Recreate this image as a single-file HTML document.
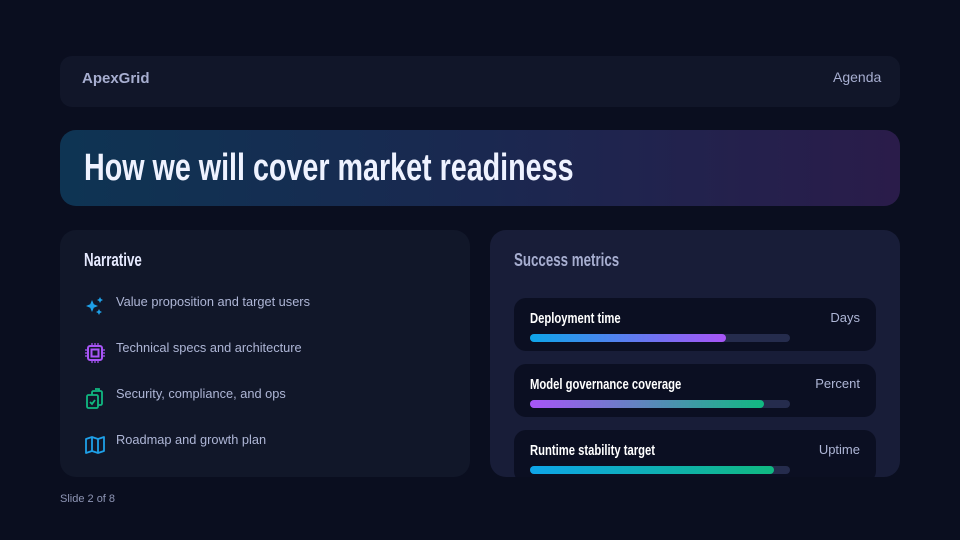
<!DOCTYPE html>
<html><head><meta charset="utf-8"><style>
*{margin:0;padding:0;box-sizing:border-box}
body{width:960px;height:540px;background:#0a0e1f;font-family:"Liberation Sans",sans-serif;position:relative;overflow:hidden}
.abs{position:absolute}
.cond{display:inline-block;transform-origin:0 50%;font-weight:bold;white-space:nowrap}
</style></head><body>
<div class="abs" style="left:60px;top:56px;width:840px;height:51px;background:#111629;border-radius:12px"></div>
<div class="abs" style="left:82px;top:70px;font-size:15px;font-weight:bold;color:#a7aed0">ApexGrid</div>
<div class="abs" style="left:833px;top:69px;font-size:14px;color:#a7aed0">Agenda</div>

<div class="abs" style="left:60px;top:130px;width:840px;height:76px;border-radius:16px;background:linear-gradient(90deg,#0e3453 0%,#1a2850 50%,#2a1c4a 100%)"></div>
<div class="abs" style="left:84px;top:146px;height:44px;line-height:44px;font-size:38px;color:#eef2ff"><span class="cond" style="transform:scaleX(0.755)">How we will cover market readiness</span></div>

<div class="abs" style="left:60px;top:230px;width:410px;height:247px;background:#111729;border-radius:16px"></div>
<div class="abs" style="left:84px;top:250px;font-size:18px;line-height:20px;color:#e6eaff"><span class="cond" style="transform:scaleX(0.74)">Narrative</span></div>

<svg class="abs" style="left:84px;top:296px" width="22" height="22" viewBox="0 0 22 22" fill="#1ea0e8"><path d="M8 4 L9.8 8.2 L14 10 L9.8 11.8 L8 16 L6.2 11.8 L2 10 L6.2 8.2Z"/><path d="M16 1 L17 3 L19 4 L17 5 L16 7 L15 5 L13 4 L15 3Z"/><path d="M15 13 L16 15 L18 16 L16 17 L15 19 L14 17 L12 16 L14 15Z"/></svg>
<div class="abs" style="left:116px;top:294px;font-size:12.8px;color:#aeb6d6">Value proposition and target users</div>

<svg class="abs" style="left:85px;top:343px" width="20" height="20" viewBox="0 0 20 20" fill="none" stroke="#a855f7" stroke-width="2"><rect x="3" y="3" width="14" height="14" rx="2"/><rect x="6.5" y="6.5" width="7" height="7"/><path d="M7 0v3M10 0v3M13 0v3M7 17v3M10 17v3M13 17v3M0 7h3M0 10h3M0 13h3M17 7h3M17 10h3M17 13h3" stroke-width="1.2"/></svg>
<div class="abs" style="left:116px;top:340px;font-size:12.8px;color:#aeb6d6">Technical specs and architecture</div>

<svg class="abs" style="left:85px;top:388px" width="20" height="22" viewBox="0 0 20 22" fill="none" stroke="#10b981" stroke-width="1.8"><rect x="7" y="3" width="10" height="14" rx="1.5"/><rect x="2" y="7" width="11" height="13" rx="1.5" fill="#111729"/><path d="M5 14l2 2 3-4"/><path d="M10 1h4v2"/></svg>
<div class="abs" style="left:116px;top:386px;font-size:12.8px;color:#aeb6d6">Security, compliance, and ops</div>

<svg class="abs" style="left:85px;top:435px" width="20" height="20" viewBox="0 0 20 20" fill="none" stroke="#1ea0e8" stroke-width="1.8" stroke-linejoin="round"><path d="M1 4 L7 2 L13 4 L19 2 L19 16 L13 18 L7 16 L1 18Z M7 2V16 M13 4V18"/></svg>
<div class="abs" style="left:116px;top:432px;font-size:12.8px;color:#aeb6d6">Roadmap and growth plan</div>

<div class="abs" style="left:490px;top:230px;width:410px;height:247px;background:#181d38;border-radius:16px;overflow:hidden">
  <div class="abs" style="left:24px;top:20px;font-size:18px;line-height:20px;color:#a7aed0"><span class="cond" style="transform:scaleX(0.74)">Success metrics</span></div>

  <div class="abs" style="left:24px;top:68px;width:362px;height:53px;background:#0b0f22;border-radius:12px"></div>
  <div class="abs" style="left:40px;top:80px;font-size:15px;color:#fff"><span class="cond" style="transform:scaleX(0.75)">Deployment time</span></div>
  <div class="abs" style="right:40px;top:80px;font-size:13px;color:#aeb6d6">Days</div>
  <div class="abs" style="left:40px;top:104px;width:260px;height:8px;border-radius:4px;background:#252c4d"></div>
  <div class="abs" style="left:40px;top:104px;width:196px;height:8px;border-radius:4px;background:linear-gradient(90deg,#0ea5e9,#a855f7)"></div>

  <div class="abs" style="left:24px;top:134px;width:362px;height:53px;background:#0b0f22;border-radius:12px"></div>
  <div class="abs" style="left:40px;top:146px;font-size:15px;color:#fff"><span class="cond" style="transform:scaleX(0.75)">Model governance coverage</span></div>
  <div class="abs" style="right:40px;top:146px;font-size:13px;color:#aeb6d6">Percent</div>
  <div class="abs" style="left:40px;top:170px;width:260px;height:8px;border-radius:4px;background:#252c4d"></div>
  <div class="abs" style="left:40px;top:170px;width:234px;height:8px;border-radius:4px;background:linear-gradient(90deg,#a855f7,#10b981)"></div>

  <div class="abs" style="left:24px;top:200px;width:362px;height:53px;background:#0b0f22;border-radius:12px"></div>
  <div class="abs" style="left:40px;top:212px;font-size:15px;color:#fff"><span class="cond" style="transform:scaleX(0.75)">Runtime stability target</span></div>
  <div class="abs" style="right:40px;top:212px;font-size:13px;color:#aeb6d6">Uptime</div>
  <div class="abs" style="left:40px;top:236px;width:260px;height:8px;border-radius:4px;background:#252c4d"></div>
  <div class="abs" style="left:40px;top:236px;width:244px;height:8px;border-radius:4px;background:linear-gradient(90deg,#0ea5e9,#10b981)"></div>
</div>

<div class="abs" style="left:60px;top:493px;font-size:11px;color:#8e95b5">Slide 2 of 8</div>
</body></html>
